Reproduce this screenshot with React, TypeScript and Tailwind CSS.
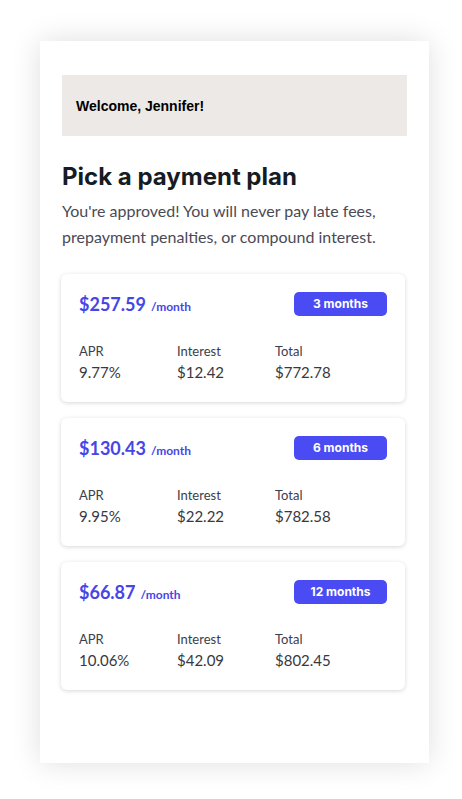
import React from 'react';

interface Plan {
  monthly: string;
  months: string;
  apr: string;
  interest: string;
  total: string;
}

const plans: Plan[] = [
  { monthly: '$257.59', months: '3 months', apr: '9.77%', interest: '$12.42', total: '$772.78' },
  { monthly: '$130.43', months: '6 months', apr: '9.95%', interest: '$22.22', total: '$782.58' },
  { monthly: '$66.87', months: '12 months', apr: '10.06%', interest: '$42.09', total: '$802.45' },
];

const PlanCard: React.FC<{ plan: Plan }> = ({ plan }) => (
  <div className="bg-white rounded-[6px] shadow-[0_1px_4px_rgba(0,0,0,0.16)] px-[18px] pt-[18px] pb-[20px]">
    <div className="flex items-center justify-between h-[24px]">
      <div className="flex items-baseline text-[#4646e8] font-bold">
        <span className="text-[18px] leading-[24px]">{plan.monthly}</span>
        <span className="text-[12px] ml-[5px]">/month</span>
      </div>
      <div
        className="w-[93px] h-[24px] rounded-[5px] bg-[#4b4bf4] text-white text-[12px] font-bold flex items-center justify-center"
        style={{ fontFamily: 'Inter, "Noto Sans", sans-serif' }}
      >
        {plan.months}
      </div>
    </div>
    <div className="grid grid-cols-[98px_98px_98px] mt-[26px]">
      {[
        ['APR', plan.apr],
        ['Interest', plan.interest],
        ['Total', plan.total],
      ].map(([label, value]) => (
        <div key={label}>
          <div className="text-[13px] leading-[18px] text-[#3d3d48]">{label}</div>
          <div className="text-[15px] leading-[20px] mt-[2px] text-[#383842]">{value}</div>
        </div>
      ))}
    </div>
  </div>
);

export default function App() {
  return (
    <div className="min-h-[799px] bg-white pt-[41px]" style={{ fontFamily: 'Lato, "Noto Sans", sans-serif' }}>
      <div className="ml-[40px] w-[389px] h-[722px] bg-white shadow-[0_0_28px_rgba(0,0,0,0.13)] pt-[34px] px-[22px]">
        <div className="h-[61px] bg-[#ede9e6] flex items-center pl-[14px] pt-[2px]">
          <span className="text-[14px] font-bold text-black" style={{ fontFamily: '"Liberation Sans", Arial, sans-serif' }}>
            Welcome, Jennifer!
          </span>
        </div>
        <h1
          className="mt-[25px] text-[24px] leading-[32px] font-bold text-[#161c24]"
          style={{ fontFamily: 'Inter, "Noto Sans", sans-serif' }}
        >
          Pick a payment plan
        </h1>
        <p className="mt-[5px] text-[16px] leading-[26px] text-[#4a4a55]">
          You're approved! You will never pay late fees, prepayment penalties, or compound interest.
        </p>
        <div className="mt-[24px] ml-[-1px] mr-[2px] flex flex-col gap-[16px]">
          {plans.map((p) => (
            <PlanCard key={p.months} plan={p} />
          ))}
        </div>
      </div>
    </div>
  );
}
